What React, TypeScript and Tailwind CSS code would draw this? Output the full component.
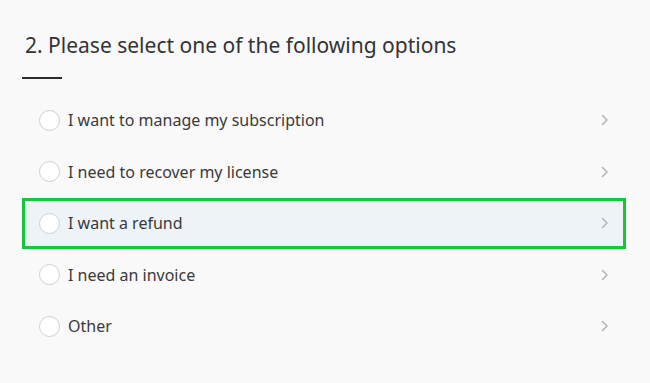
import React from "react";

const options = [
  "I want to manage my subscription",
  "I need to recover my license",
  "I want a refund",
  "I need an invoice",
  "Other",
];

function Chevron() {
  return (
    <svg width="8" height="12" viewBox="0 0 8 12" fill="none">
      <path d="M1.5 1.5 L6 6 L1.5 10.5" stroke="#b5b5b5" strokeWidth="1.6" strokeLinecap="round" strokeLinejoin="round" />
    </svg>
  );
}

export default function App() {
  return (
    <div
      className="w-[650px] h-[383px] bg-[#f9f9f9] overflow-hidden"
      style={{ fontFamily: '"Noto Sans", "Open Sans", sans-serif' }}
    >
      <div className="pl-[22px] pt-[31px] w-[626px]">
        <h2 className="pl-[3px] text-[21px] leading-[29px] text-[#333] font-normal">
          2. Please select one of the following options
        </h2>
        <div className="mt-[17px] w-[40px] h-[2px] bg-[#2b2b2b]" />
        <div className="mt-[15.5px] flex flex-col">
          {options.map((o, i) => (
            <div
              key={o}
              className={
                "h-[51.5px] flex items-center pl-[14px] pr-[14px] border-[3px] " +
                (i === 2 ? "border-[#14c83a] bg-[#edf3f7]" : "border-transparent")
              }
            >
              <div className="w-[21px] h-[21px] rounded-full border-[1.5px] border-[#cfcfcf] bg-white shrink-0" />
              <span className="ml-[8px] text-[16px] text-[#3a3a3a] flex-1">{o}</span>
              <Chevron />
            </div>
          ))}
        </div>
      </div>
    </div>
  );
}
